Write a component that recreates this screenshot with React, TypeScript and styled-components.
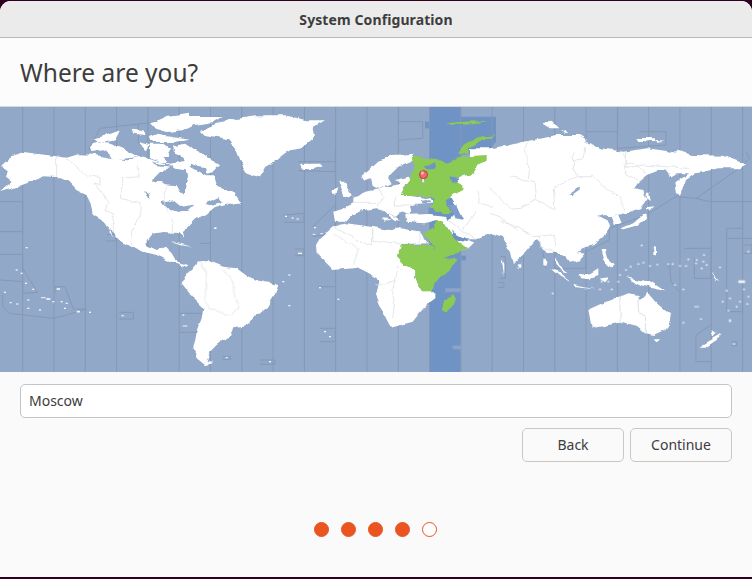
import React from "react";
import styled, { createGlobalStyle } from "styled-components";

const Global = createGlobalStyle`
  html, body { margin: 0; padding: 0; background: #2c001e; }
  #root { width: 752px; height: 579px; overflow: hidden; }
`;
const Window = styled.div`
  width: 752px; height: 579px; box-sizing: border-box; padding: 1px 0 2px;
  display: flex; flex-direction: column; font-family: "Noto Sans", sans-serif; color: #3d3d3d;
`;
const Panel = styled.div`
  flex: 1; display: flex; flex-direction: column; background: #fafafa;
  border-radius: 11px 11px 0 0; overflow: hidden;
`;
const TitleBar = styled.div`
  height: 36px; flex: none; background: #ebebeb; border-bottom: 1px solid #b8b8b8;
  display: flex; align-items: center; justify-content: center;
  font-size: 14px; font-weight: 700; letter-spacing: 0.1px; color: #3d3d3d;
`;
const TitleText = styled.span`
  padding-top: 1px;
`;
const Header = styled.div`
  box-sizing: border-box; height: 69px; flex: none; display: flex; align-items: center; padding: 2px 20px 0;
  border-bottom: 1px solid #d9d9d9; background: #fcfcfc;
`;
const Heading = styled.h1`
  margin: 0; font-size: 24.5px; font-weight: 400; color: #3d3d3d; line-height: 1;
`;
const MapFrame = styled.svg`
  display: block; flex: none; width: 752px; height: 265px; background: #92a8c8;
`;
const Form = styled.div`
  flex: 1; display: flex; flex-direction: column; padding: 12px 20px 0;
`;
const CityInput = styled.input`
  box-sizing: border-box; width: 712px; height: 34px; padding: 0 8px 2px;
  border: 1px solid #c4c4c4; border-radius: 5px; background: #fff; outline: none;
  font: 400 14px "Noto Sans", sans-serif; color: #3d3d3d;
`;
const Actions = styled.div`
  display: flex; justify-content: flex-end; gap: 6px; margin-top: 10px;
`;
const Button = styled.button`
  box-sizing: border-box; width: 102px; height: 34px; background: #fafafa; padding: 0 0 2px;
  border: 1px solid #cdc7c2; border-radius: 5px; color: #3d3d3d;
  font: 400 14px "Noto Sans", sans-serif;
`;
const Dots = styled.div`
  display: flex; justify-content: center; gap: 12px; margin-top: 60px; padding-right: 1px;
`;
const Dot = styled.span<{ $filled: boolean }>`
  box-sizing: border-box; width: 15px; height: 15px; border-radius: 50%;
  border: 1px solid #e95420; background: ${(p) => (p.$filled ? "#e95420" : "#fff")};
`;

const WHITE = "#ffffff";
const GREEN = "#8ccb52";
const OCEAN = "#92a8c8";
const BAND = "#6f93c6";
const ZONE = "#8598b6";
const BORDER = "#dde0e4";

const Crop = ({ x, y, children }: { x: number; y: number; children: React.ReactNode }) => (
  <g transform={`translate(${x},${y}) scale(${1 / 3})`}>{children}</g>
);
const Polys = ({ pts, fill }: { pts: string[]; fill: string }) => (
  <>{pts.map((p, i) => <polygon key={i} points={p} fill={fill} />)}</>
);
const Lines = ({ pts, color, width }: { pts: string[]; color: string; width: number }) => (
  <>{pts.map((p, i) => <polyline key={i} points={p} fill="none" stroke={color} strokeWidth={width} />)}</>
);
const Specks = ({ pts }: { pts: number[][] }) => (
  <>{pts.map(([x, y, w = 6, h = 4], i) => <rect key={i} x={x - w / 2} y={y - h / 2} width={w} height={h} fill="#f2f4f8" />)}</>
);

const zoneX = Array.from({ length: 24 }, (_, i) => 22.7 + i * 31.3);

const z2Zones = [
  "0,290 68,290 68,380 0,380", "0,448 68,448 68,490 112,562 68,565 68,530 0,525", "8,570 8,605 30,625 160,640 200,630 260,612 220,612 195,545 165,545 165,565",
  "358,622 400,622 400,642 358,642", "320,388 348,388 348,408 320,408", "540,625 610,625 600,682 540,682",
  "668,755 692,755 692,763 668,763", "853,330 912,325 912,352 853,352", "938,365 1006,300 1006,385 938,395", "884,432 912,432 912,452 884,452",
  "958,670 1006,670 1006,710 958,710", "955,545 1006,545", "895,170 1006,170 1006,200 895,197", "265,135 300,70 480,50 660,35", "415,60 415,115", "630,415 600,415", "1006,130 1006,170", "780,765 825,765 825,778 780,778",
];
const z3Zones = [
  "68,0 68,50 140,50 140,100 68,105 68,140", "630,80 725,80 725,10", "725,130 870,120 870,80 790,80", "1110,140 1120,160 1090,190 960,280 900,275 810,330 700,370 700,405 630,440 630,490",
  "1128,290 1000,290 960,280", "1100,290 1100,370 1052,370 1052,400 1128,400", "1100,420 1128,420 1128,445 1100,445",
  "925,430 1005,430 1005,520 955,520 955,460", "1052,400 1052,620 1100,620 1100,540", "1005,660 960,690 960,770 1005,770", "1066,710 1082,710 1082,722 1066,722",
  "880,470 885,530 910,560", "372,455 388,455 388,520 372,520", "366,533 384,533 384,547 366,547", "536,490 630,490", "500,440 510,490",
];

/* Crop A: (0,107) */
const aLand = [
  "5,172 30,150 70,135 110,140 170,148 200,152 235,142 280,143 330,152 380,160 415,150 445,155 470,165 510,170 570,160 570,350 545,375 530,375 490,375 455,380 440,400 440,420 395,420 365,405 340,375 325,365 345,392 330,378 305,340 280,325 272,290 260,265 230,250 205,225 170,210 130,208 90,225 50,240 0,255 35,225 15,210 25,195 5,178",
  "270,120 285,105 330,110 370,125 415,150 345,158 310,130 275,135",
  "275,95 320,85 360,70 345,100 305,108",
  "395,65 430,70 440,85 400,80",
  "415,105 450,115 440,130",
  "455,50 500,30 570,20 570,50 520,65 470,60",
  "445,95 500,85 570,95 510,105 460,105",
  "450,125 500,120 510,150 470,150",
];
const aOcean = [
  "432,250 445,255 452,272 440,265",
  "478,290 520,280 545,300 570,310 535,318 510,305 500,295",
];
const aBorders = [
  "170,148 170,210", "200,155 225,175 260,205 300,212 300,232 285,232 325,285 315,310 340,320 340,375",
  "415,165 415,210 365,212 365,275 420,290 420,330 395,375 395,415", "500,240 490,275 505,320 520,345 520,375",
];

/* Crop B: (150,107) */
const bLand = [
  "0,160 60,170 80,185 120,180 165,205 195,205 205,240 250,258 272,290 230,290 195,300 165,325 140,335 120,355 95,375 100,395 85,378 40,375 0,378",
  "80,115 105,110 135,130 165,145 210,175 190,195 170,200 165,180 130,175 110,165 90,140",
  "0,48 50,38 120,30 215,30 190,45 130,55 100,70 50,75 15,65",
  "0,90 25,80 70,90 110,100 70,105 20,100",
  "0,110 40,110 60,125 40,150 55,165 30,165 0,155",
  "65,115 100,125 100,150 75,140",
  "150,72 180,58 240,35 320,25 400,25 470,40 525,40 490,60 495,85 470,105 450,125 420,130 380,160 345,180 330,212 290,195 270,165 255,125 235,100 195,92 165,88",
  "450,170 510,170 518,178 480,190 458,188",
  "65,405 90,410 130,420 90,415",
];
const bOcean = [
  "10,215 30,195 45,190 60,175 75,185 110,190 115,205 105,240 105,262 95,262 80,235 45,232 35,225 10,225",
  "30,285 60,280 70,300 105,295 130,290 110,310 85,318 70,300 55,295 30,292",
  "165,290 205,270 215,285 180,295",
  "0,163 30,170 60,172 58,178 20,175",
];
const bSpecks = [[408, 328], [428, 333], [443, 336], [495, 362], [492, 382, 8, 3], [515, 380, 8, 3], [197, 363]];

/* Crop C: (320,140) */
const cLand = [
  "55,125 75,125 100,165 75,172 65,150", "30,155 55,145 50,162 35,165",
  "125,110 175,65 215,45 280,42 278,62 235,80 205,110 215,130 180,145 155,135 150,115 130,122",
  "225,120 265,110 290,130 258,135",
  "40,215 65,208 100,190 100,170 145,150 180,145 225,135 258,130 245,160 300,170 340,180 335,192 280,195 270,225 240,215 225,230 200,215 170,205 130,210 95,225 75,245 45,245",
  "170,200 200,215 240,242 225,240 195,220",
  "255,225 330,222 375,228 385,240 430,190 520,190 520,280 470,295 445,295 410,290 390,280 375,255 350,240 310,250 260,245",
  "185,235 215,238 190,245", "445,325 465,305 445,298 410,290 430,335",
  "-12,315 0,295 40,260 80,250 155,260 210,270 240,265 300,275 315,305 330,310 245,312 230,350 255,375 280,380 280,420 170,416 140,399 110,384 40,390 10,360 -10,340",
];
const cOcean = ["270,198 330,192 345,210 328,222 275,218", "205,112 240,78 250,92 225,115 218,130", "300,183 320,180 335,190 310,190"];
const cBandWater = ["328,205 345,210 345,222 328,222", "392,272 410,282 445,300 430,305 405,295"];
const cGreen = [
  "275,50 330,55 375,70 420,50 500,45 500,62 470,75 465,100 390,115 430,135 430,150 400,165 380,185 395,218 370,220 330,205 345,175 300,165 240,165 265,125 282,85",
  "350,240 365,240 390,280 410,300 445,325 430,335 395,345 365,355 335,310 310,283 340,262",
];
const cCut = ["310,75 345,72 350,85 320,85", "388,115 420,112 415,125 395,130"];
const cBorders = [
  "40,262 155,320 155,270", "155,262 155,300 245,312", "230,170 225,195 290,195", "175,145 190,175 170,200", "100,190 170,190", "300,275 300,312",
  "470,150 480,190 520,200", "430,270 465,215", "385,240 430,275 470,295",
];

/* Crop D: (490,120) */
const dLand = [
  "-60,85 0,85 40,80 80,70 130,60 200,45 270,45 295,60 250,75 290,70 330,85 400,95 470,85 510,90 570,100 640,120 640,155 570,150 510,150 470,165 440,190 430,205 460,210 470,240 450,265 420,275 385,285 365,290 345,285 325,290 355,305 360,320 340,350 310,375 280,385 255,405 225,390 195,395 168,396 138,360 108,396 72,429 39,351 3,339 -60,340",
  "155,10 185,5 205,25 180,25", "210,35 225,30 235,40", "440,55 490,55 470,65", "500,60 525,62 500,65",
  "470,215 478,215 482,245 470,240", "395,325 430,310 460,285 470,280 470,295 445,315 400,328", "468,265 490,262 480,272", "365,290 385,285 395,310 375,315",
];
const dOcean = ["235,222 265,200 270,205 245,222"];
const dBorders = [
  "120,60 100,90 120,140 115,175", "60,170 135,185 140,235 90,262 60,265 0,205", "250,100 250,145 265,170 235,180 190,205 195,270 140,240",
  "265,170 310,170 350,210 395,240 400,270", "285,80 280,110 250,120", "400,130 430,130 470,160", "30,300 75,320 130,350 190,345 200,380", "400,100 410,130 405,160 440,180",
  "0,280 30,290 80,330", "145,345 150,380 190,390",
];

/* Z3 (376,105) */
const z3Land = [
  "335,165 355,130 385,120 415,130 480,105 560,90 635,110 620,300 345,385 290,380 240,385 225,350 262,345 240,300 225,275 240,260 262,245 222,235 235,220 295,205 300,185",
  "905,137 950,150 1040,152 1110,178 1090,190 1030,190 960,205 930,225 915,270 900,265 895,235 940,205 900,205 880,215 860,190",
  "0,410 75,418 62,455 85,480 115,495 115,520 140,562 178,562 178,580 150,600 110,650 45,668 30,640 0,570 10,530 0,520",
  "425,478 436,478 436,488 425,488", "505,455 515,470 510,485", "375,460 385,480 385,510", "830,425 838,425 838,455",
  "785,100 840,100 840,108 790,108",
];
const z3Green = [
  "75,418 165,420 205,460 245,462 225,490 175,535 170,560 140,562 115,520 115,495 85,480 62,455",
  "235,568 240,585 215,625 197,615 205,585",
  "210,55 260,50 335,48 290,58 230,60",
  "248,145 262,120 290,103 355,90 350,97 310,110 275,130 280,145 262,148",
];
const z3Water = ["222,300 240,298 262,345 235,340"];
const z3Borders = [
  "65,480 50,560 55,600 50,640", "0,540 60,530", "750,140 745,190 800,180 940,190",
];
/* Crop E: (540,240) */
const eLand = [
  "0,0 90,0 105,15 105,40 135,40 115,62 90,68 75,50 55,40 40,30 18,36 5,20",
  "45,55 55,75 85,100 65,92 45,70", "30,85 55,95 95,130 60,110", "95,135 150,145 165,148 95,140",
  "115,105 150,100 175,85 175,105 150,120 125,118", "180,115 205,112 190,130", "185,30 195,30 200,50 222,70 215,85 200,70 190,50",
  "255,112 290,118 330,125 375,155 340,145 300,135", "145,210 200,185 240,170 265,160 295,165 300,180 320,155 350,190 392,225 385,265 340,285 315,280 290,260 240,248 155,265 150,235",
  "338,295 360,295 350,308", "475,320 510,300 545,280 530,300 500,320", "515,268 530,280 515,290", "10,55 18,55 18,78 10,75",
  "340,18 348,20 348,45 340,45", "515,95 530,115 542,122 525,118",
];
const eSpecks = [
  [120, 22], [305, 16], [258, 90], [272, 80], [295, 72], [310, 68], [330, 78], [352, 74], [385, 72], [398, 72], [420, 78], [438, 78], [468, 70], [490, 65], [500, 75], [485, 85], [470, 60], [540, 82], [625, 35], [445, 58], [492, 45],
  [405, 135], [430, 148], [470, 200, 14, 3], [483, 237], [430, 248], [570, 242, 6, 8], [565, 212], [548, 185], [560, 152], [570, 175], [590, 200], [600, 185], [605, 125, 20, 8], [612, 148], [625, 170], [622, 192], [582, 312], [38, 160], [240, 105], [235, 125], [215, 148], [180, 148], [185, 125], [205, 125],
];
const eBorders = ["240,170 240,248", "295,165 295,218 316,225 316,280"];
/* Z2 (0,105) */
const z2Land = [
  "545,535 560,505 580,495 590,470 620,465 670,485 710,490 740,512 770,525 835,540 825,570 800,610 760,640 730,665 700,670 690,690 650,720 630,740 620,770 640,775 615,780 590,760 580,730 590,680 605,640 610,610 580,580",
  "395,425 440,420 470,435 495,425 515,445 530,470 565,480 560,485 530,475 500,465 470,450 430,440",
];
const z2Specks = [[50, 495], [65, 505], [78, 535], [100, 553], [175, 552, 10, 5], [15, 562], [32, 593], [52, 597], [85, 585], [130, 578, 14, 3], [145, 582, 12, 5], [160, 590], [185, 590], [200, 595], [195, 610], [120, 615], [85, 610], [235, 620, 10, 5], [270, 622], [368, 632], [550, 630], [555, 663, 14, 3], [645, 370], [80, 428], [900, 445, 12, 4], [868, 510], [850, 530], [960, 548], [1015, 583], [868, 602], [990, 695], [680, 758], [810, 770], [975, 680]];
const z2Borders = [
  "600,470 620,510 615,580 625,610 690,630 720,610 690,520 670,490", "1000,385 1075,430 1060,480",
];

const WorldMap = () => (
  <MapFrame viewBox="0 107 752 265" preserveAspectRatio="none" aria-label="world map">
    <defs>
      <filter id="soft" filterUnits="userSpaceOnUse" x="0" y="107" width="752" height="265">
        <feGaussianBlur stdDeviation="0.35" />
      </filter>
      <filter id="rough" filterUnits="userSpaceOnUse" x="0" y="107" width="752" height="265">
        <feTurbulence type="fractalNoise" baseFrequency="0.09" numOctaves="3" seed="7" result="n" />
        <feDisplacementMap in="SourceGraphic" in2="n" scale="5" xChannelSelector="R" yChannelSelector="G" />
      </filter>
    </defs>
    <g filter="url(#soft)">
      <rect x={0} y={107} width={752} height={265} fill={OCEAN} />
      <rect x={429.3} y={107} width={31.4} height={265} fill={BAND} />
      <Crop x={376} y={105}>
        <polygon points="147,50 160,50 160,70 147,70" fill={BAND} />
        <polygon points="254,35 360,35 360,110 335,140 254,150" fill={BAND} />
        <polygon points="254,452 270,452 270,466 254,466" fill={BAND} />
      </Crop>
      {zoneX.map((x) => <line key={x} x1={x} y1={107} x2={x} y2={372} stroke={ZONE} strokeWidth={1} />)}
      <Crop x={0} y={105}><Lines pts={z2Zones} color={ZONE} width={3} /></Crop>
      <Crop x={376} y={105}><Lines pts={z3Zones} color={ZONE} width={3} /></Crop>

      <g filter="url(#rough)">
        <Crop x={0} y={107}><Polys pts={aLand} fill={WHITE} /></Crop>
        <Crop x={150} y={107}><Polys pts={bLand} fill={WHITE} /></Crop>
        <Crop x={0} y={105}><Polys pts={z2Land} fill={WHITE} /></Crop>
        <Crop x={320} y={140}><Polys pts={cLand} fill={WHITE} /></Crop>
        <Crop x={490} y={120}><Polys pts={dLand} fill={WHITE} /></Crop>
        <Crop x={376} y={105}><Polys pts={z3Land} fill={WHITE} /></Crop>
        <Crop x={540} y={240}><Polys pts={eLand} fill={WHITE} /></Crop>
        <Crop x={0} y={107}><Polys pts={aOcean} fill={OCEAN} /></Crop>
        <Crop x={150} y={107}><Polys pts={bOcean} fill={OCEAN} /></Crop>
        <Crop x={320} y={140}>
          <Polys pts={cOcean} fill={OCEAN} />
          <Polys pts={cBandWater} fill={BAND} />
          <Polys pts={cGreen} fill={GREEN} />
          <Polys pts={cCut} fill={BAND} />
        </Crop>
        <Crop x={376} y={105}>
          <Polys pts={z3Water} fill="#7f9dc8" />
          <Polys pts={z3Green} fill={GREEN} />
        </Crop>
        <Crop x={490} y={120}><Polys pts={dOcean} fill={OCEAN} /><Lines pts={dBorders} color={BORDER} width={2.4} /></Crop>
        <Crop x={0} y={107}><Lines pts={aBorders} color={BORDER} width={2.4} /></Crop>
        <Crop x={0} y={105}><Lines pts={z2Borders} color={BORDER} width={2.4} /></Crop>
        <Crop x={320} y={140}><Lines pts={cBorders} color={BORDER} width={2.4} /></Crop>
        <Crop x={376} y={105}><Lines pts={z3Borders} color={BORDER} width={2.4} /></Crop>
        <Crop x={540} y={240}><Lines pts={eBorders} color={BORDER} width={3} /></Crop>
      </g>
      <Crop x={0} y={105}><Specks pts={z2Specks} /></Crop>
      <Crop x={150} y={107}><Specks pts={bSpecks} /></Crop>
      <Crop x={540} y={240}><Specks pts={eSpecks} /></Crop>
      <Crop x={376} y={105}>
        <rect x={208} y={550} width={46} height={11} fill="#8fa5c6" />
        <rect x={230} y={722} width={26} height={10} fill="#8fa5c6" />
      </Crop>
    </g>
    <Crop x={320} y={140}>
      <rect x={306} y={114} width={7} height={14} fill="#f4f4f4" stroke="#8a8a8a" strokeWidth={1.2} />
      <circle cx={310.5} cy={104} r={12} fill="#ef6a6a" stroke="#b8262a" strokeWidth={2.5} />
      <circle cx={307} cy={99} r={5} fill="#f8b0b0" />
    </Crop>
  </MapFrame>
);

export default function App() {
  return (
    <Window>
      <Global />
      <Panel>
        <TitleBar><TitleText>System Configuration</TitleText></TitleBar>
        <Header><Heading>Where are you?</Heading></Header>
        <WorldMap />
        <Form>
          <CityInput value="Moscow" readOnly />
          <Actions>
            <Button>Back</Button>
            <Button>Continue</Button>
          </Actions>
          <Dots>
            {[true, true, true, true, false].map((f, i) => <Dot key={i} $filled={f} />)}
          </Dots>
        </Form>
      </Panel>
    </Window>
  );
}
